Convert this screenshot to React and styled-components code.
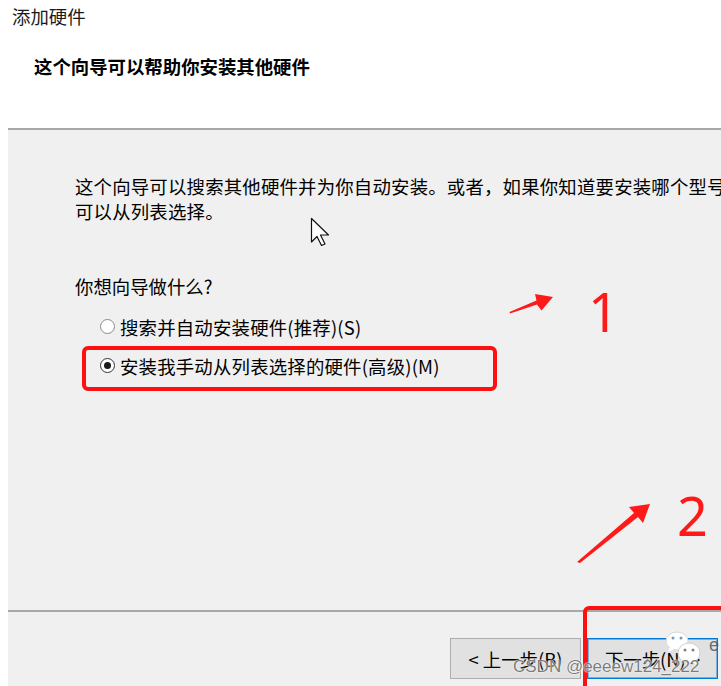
import React from "react";
import styled, { createGlobalStyle } from "styled-components";

const GlobalStyle = createGlobalStyle`
  html, body { margin: 0; padding: 0; background: #ffffff; }
  body { font-family: "Noto Sans CJK SC", "Noto Sans", sans-serif; }
`;

const Page = styled.div`
  position: relative;
  width: 721px;
  height: 686px;
  overflow: hidden;
  background: #ffffff;
  display: flex;
  flex-direction: column;
  color: #000;
  font-family: "Noto Sans CJK SC", "Noto Sans", sans-serif;
`;

const Header = styled.div`
  height: 128px;
  flex: none;
  display: flex;
  flex-direction: column;
`;

const WindowTitle = styled.div`
  padding: 4px 0 0 12px;
  font-size: 18.4px;
  line-height: 24px;
  color: #1a1a1a;
`;

const Heading = styled.div`
  margin-top: 26px;
  padding-left: 34px;
  font-size: 18.4px;
  line-height: 24px;
  font-weight: 700;
`;

const Body = styled.div`
  flex: none;
  margin-left: 8px;
  background: #f0f0f0;
  border-top: 2px solid #a8a8a8;
  padding: 44px 0 0 67px;
  box-sizing: border-box;
  height: 482px;
  display: flex;
  flex-direction: column;
`;

const Paragraph = styled.p`
  margin: 0;
  width: 760px;
  font-size: 18.4px;
  line-height: 25px;
  letter-spacing: 0.2px;
  white-space: nowrap;
`;

const Question = styled.div`
  margin-top: 50px;
  font-size: 18.4px;
  line-height: 25px;
`;

const Options = styled.div`
  margin-top: 8px;
  display: flex;
  flex-direction: column;
  padding-left: 25px;
`;

const OptionRow = styled.label`
  height: 39px;
  display: flex;
  align-items: center;
  gap: 5px;
  font-size: 18.4px;
  letter-spacing: 0.2px;
`;

const RadioCircle = styled.span`
  width: 13px;
  height: 13px;
  border-radius: 50%;
  border: 1px solid ${(p) => (p.$checked ? "#333333" : "#8a8a8a")};
  background: #ffffff;
  display: flex;
  align-items: center;
  justify-content: center;
  flex: none;
  &::after {
    content: "";
    width: 7px;
    height: 7px;
    border-radius: 50%;
    background: ${(p) => (p.$checked ? "#1a1a1a" : "transparent")};
  }
`;

const Footer = styled.div`
  flex: 1;
  margin-left: 8px;
  background: #f0f0f0;
  border-top: 2px solid #a8a8a8;
  display: flex;
  justify-content: flex-end;
  align-items: flex-start;
  padding: 26px 3px 0 0;
  gap: 6px;
`;

const Button = styled.div`
  width: 131px;
  height: 41px;
  box-sizing: border-box;
  background: #e1e1e1;
  border: 1px solid ${(p) => (p.$primary ? "#0078d7" : "#adadad")};
  box-shadow: ${(p) => (p.$primary ? "inset 0 0 0 1px rgba(0,120,215,0.45)" : "none")};
  display: flex;
  align-items: center;
  justify-content: center;
  font-size: 18.4px;
  color: #000;
`;

/* ---------- annotation overlays ---------- */

const RedBox = styled.div`
  position: absolute;
  left: ${(p) => p.$x}px;
  top: ${(p) => p.$y}px;
  width: ${(p) => p.$w}px;
  height: ${(p) => p.$h}px;
  box-sizing: border-box;
  border: 4px solid #ff1010;
  border-radius: 6px;
  pointer-events: none;
`;

const Number = styled.div`
  position: absolute;
  left: ${(p) => p.$x}px;
  top: ${(p) => p.$y}px;
  font-family: "Noto Sans", "Open Sans", sans-serif;
  font-size: 54px;
  line-height: 54px;
  color: #ff1a1a;
  pointer-events: none;
`;

const Drawing = styled.svg`
  position: absolute;
  left: 0;
  top: 0;
  width: 721px;
  height: 686px;
  pointer-events: none;
`;

const Watermark = styled.div`
  position: absolute;
  left: 513px;
  top: 656px;
  font-family: "Liberation Sans", Arial, sans-serif;
  font-size: 17px;
  line-height: 22px;
  color: rgba(80, 80, 80, 0.75);
  text-shadow: 0 0 1px #fff, 0 0 2px #fff;
  pointer-events: none;
  white-space: nowrap;
`;

const WatermarkE = styled.div`
  position: absolute;
  left: 709px;
  top: 634px;
  font-family: "Liberation Sans", Arial, sans-serif;
  font-size: 18px;
  line-height: 22px;
  color: rgba(80, 80, 80, 0.8);
  pointer-events: none;
`;

export default function App() {
  return (
    <>
      <GlobalStyle />
      <Page>
        <Header>
          <WindowTitle>添加硬件</WindowTitle>
          <Heading>这个向导可以帮助你安装其他硬件</Heading>
        </Header>
        <Body>
          <Paragraph>
            这个向导可以搜索其他硬件并为你自动安装。或者，如果你知道要安装哪个型号，
          </Paragraph>
          <Paragraph>可以从列表选择。</Paragraph>
          <Question>你想向导做什么?</Question>
          <Options>
            <OptionRow>
              <RadioCircle />
              搜索并自动安装硬件(推荐)(S)
            </OptionRow>
            <OptionRow>
              <RadioCircle $checked />
              安装我手动从列表选择的硬件(高级)(M)
            </OptionRow>
          </Options>
        </Body>
        <Footer>
          <Button>&lt; 上一步(B)</Button>
          <Button $primary>下一步(N) &gt;</Button>
        </Footer>

        <RedBox $x={82} $y={346} $w={415} $h={45} />
        <RedBox $x={583} $y={606} $w={160} $h={100} />
        <Number $x={588} $y={284}>1</Number>
        <Number $x={677} $y={488}>2</Number>

        <Drawing viewBox="0 0 721 686">
          {/* mouse cursor */}
          <path
            d="M311.5 218.5 L311.5 242 L317 236.5 L321.5 245.5 L325 244 L320.5 235 L328.5 235 Z"
            fill="#ffffff"
            stroke="#111111"
            strokeWidth="1.2"
            strokeLinejoin="round"
          />
          {/* arrow 1 */}
          <path
            d="M510 313.5 L537 304.5 L541.5 310.5 L553 297 L535 294 L536.5 300.5 L509.5 312 Z"
            fill="#ff1a1a"
          />
          {/* arrow 2 */}
          <path
            d="M577 562 L634 513 L629 507 L650 504 L643 523 L638 517 L580 563 Z"
            fill="#ff1a1a"
          />
          {/* wechat-like watermark icon */}
          <g>
            <ellipse cx="677" cy="641" rx="11" ry="9" fill="#ffffff" stroke="#d8d8d8" strokeWidth="1" />
            <path d="M670 647 L668 652 L674 649 Z" fill="#ffffff" />
            <circle cx="673" cy="638" r="1.5" fill="#6f9cc4" />
            <circle cx="681" cy="638" r="1.5" fill="#6f9cc4" />
            <ellipse cx="689" cy="653" rx="11" ry="10" fill="#ffffff" stroke="#d0d0d0" strokeWidth="1" />
            <path d="M694 660 L698 665 L691 662 Z" fill="#ffffff" />
            <circle cx="685" cy="650" r="1.5" fill="#808080" />
            <circle cx="693" cy="650" r="1.5" fill="#808080" />
          </g>
        </Drawing>
        <WatermarkE>e</WatermarkE>
        <Watermark>CSDN @eeeew124_222</Watermark>
      </Page>
    </>
  );
}
